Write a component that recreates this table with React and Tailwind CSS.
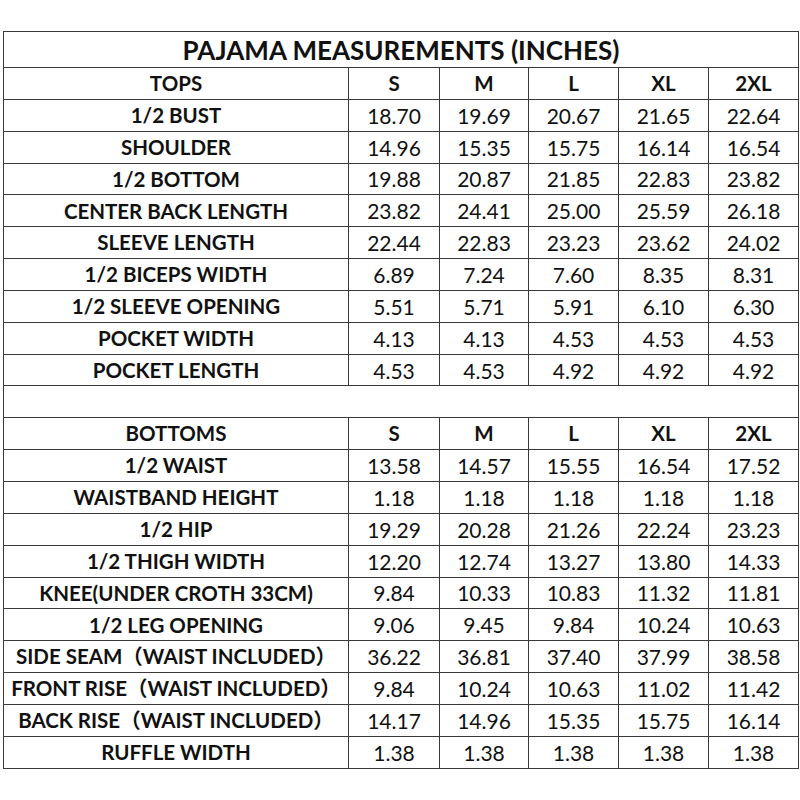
const sizes = ["S", "M", "L", "XL", "2XL"];

const tops = [
  ["1/2 BUST", "18.70", "19.69", "20.67", "21.65", "22.64"],
  ["SHOULDER", "14.96", "15.35", "15.75", "16.14", "16.54"],
  ["1/2 BOTTOM", "19.88", "20.87", "21.85", "22.83", "23.82"],
  ["CENTER BACK LENGTH", "23.82", "24.41", "25.00", "25.59", "26.18"],
  ["SLEEVE LENGTH", "22.44", "22.83", "23.23", "23.62", "24.02"],
  ["1/2 BICEPS WIDTH", "6.89", "7.24", "7.60", "8.35", "8.31"],
  ["1/2 SLEEVE OPENING", "5.51", "5.71", "5.91", "6.10", "6.30"],
  ["POCKET WIDTH", "4.13", "4.13", "4.53", "4.53", "4.53"],
  ["POCKET LENGTH", "4.53", "4.53", "4.92", "4.92", "4.92"],
];

const bottoms = [
  ["1/2 WAIST", "13.58", "14.57", "15.55", "16.54", "17.52"],
  ["WAISTBAND HEIGHT", "1.18", "1.18", "1.18", "1.18", "1.18"],
  ["1/2 HIP", "19.29", "20.28", "21.26", "22.24", "23.23"],
  ["1/2 THIGH WIDTH", "12.20", "12.74", "13.27", "13.80", "14.33"],
  ["KNEE(UNDER CROTH 33CM)", "9.84", "10.33", "10.83", "11.32", "11.81"],
  ["1/2 LEG OPENING", "9.06", "9.45", "9.84", "10.24", "10.63"],
  ["SIDE SEAM（WAIST INCLUDED）", "36.22", "36.81", "37.40", "37.99", "38.58"],
  ["FRONT RISE（WAIST INCLUDED）", "9.84", "10.24", "10.63", "11.02", "11.42"],
  ["BACK RISE（WAIST INCLUDED）", "14.17", "14.96", "15.35", "15.75", "16.14"],
  ["RUFFLE WIDTH", "1.38", "1.38", "1.38", "1.38", "1.38"],
];

const cell = "border-[1.5px] border-[#3a3a3a] h-[31.85px] p-0 text-center align-middle";

function HeaderRow({ label }) {
  return (
    <tr>
      <td className={`${cell} font-bold text-[20.5px]`}>{label}</td>
      {sizes.map((s) => (
        <td key={s} className={`${cell} font-bold text-[20.5px]`}>
          {s}
        </td>
      ))}
    </tr>
  );
}

function DataRow({ row }) {
  return (
    <tr>
      <td className={`${cell} font-bold text-[20.5px] whitespace-nowrap`}>{row[0]}</td>
      {row.slice(1).map((v, i) => (
        <td key={i} className={`${cell} text-[21px]`}>
          {v}
        </td>
      ))}
    </tr>
  );
}

export default function App() {
  return (
    <div className="w-[800px] h-[800px] bg-white pt-[31px] pl-[3px]">
      <table
        className="border-collapse table-fixed w-[795px] text-[#111] leading-none"
        style={{ fontFamily: 'Lato, "Noto Sans CJK SC", sans-serif' }}
      >
        <colgroup>
          <col className="w-[345px]" />
          <col className="w-[91px]" />
          <col className="w-[89px]" />
          <col className="w-[90px]" />
          <col className="w-[90px]" />
          <col className="w-[90px]" />
        </colgroup>
        <tbody>
          <tr>
            <td colSpan={6} className="border-[1.5px] border-[#3a3a3a] h-[36px] p-0 text-center align-middle font-bold text-[26px]">
              PAJAMA MEASUREMENTS (INCHES)
            </td>
          </tr>
          <HeaderRow label="TOPS" />
          {tops.map((r) => (
            <DataRow key={r[0]} row={r} />
          ))}
          <tr>
            <td colSpan={6} className={cell}></td>
          </tr>
          <HeaderRow label="BOTTOMS" />
          {bottoms.map((r) => (
            <DataRow key={r[0]} row={r} />
          ))}
        </tbody>
      </table>
    </div>
  );
}
